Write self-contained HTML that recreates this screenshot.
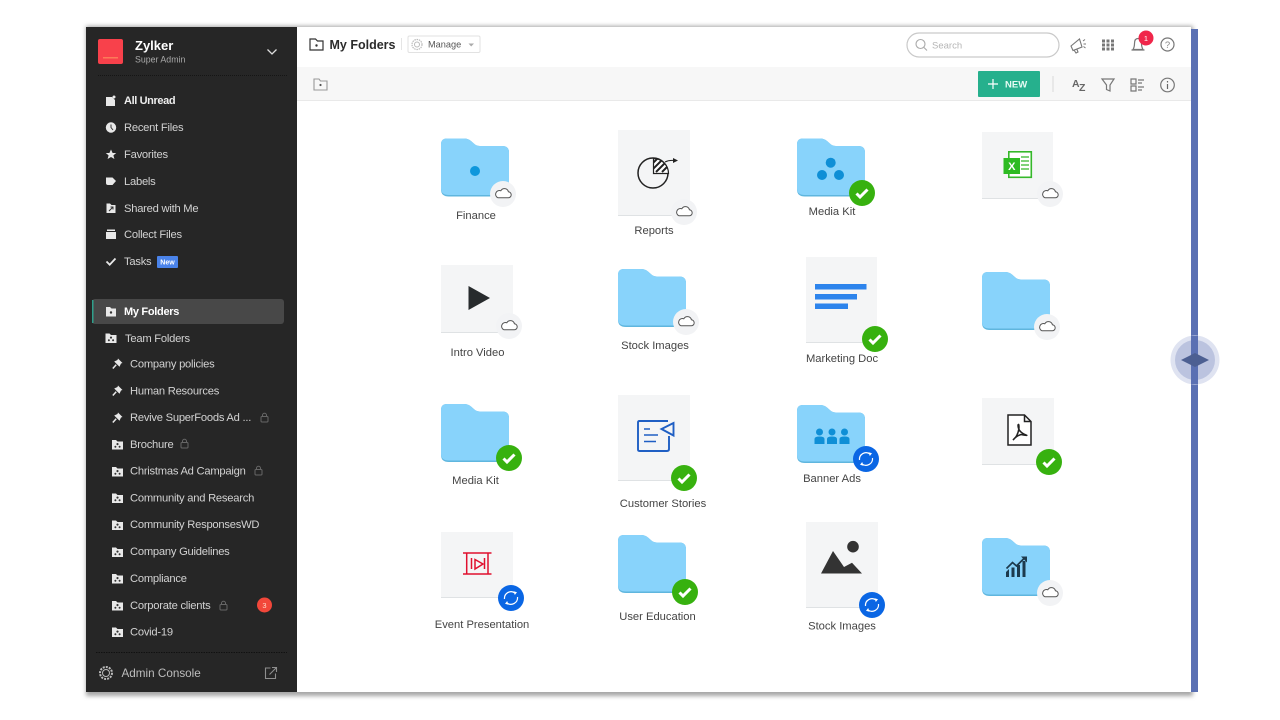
<!DOCTYPE html>
<html><head><meta charset="utf-8"><title>My Folders</title>
<style>
html,body{margin:0;padding:0;background:#fff;width:1280px;height:720px;overflow:hidden}
svg{position:absolute;left:0;top:0;display:block}
text{font-family:"Liberation Sans",sans-serif}
.s{fill:#d2d2d2;font-size:11.2px;letter-spacing:-.24px}
.l{fill:#444;font-size:11.2px;letter-spacing:0;text-anchor:middle}
.ic{fill:#e8e8e8}
.g{fill:none;stroke:#777;stroke-width:1.2}
</style></head><body>
<svg width="1280" height="720" viewBox="0 0 1280 720" xmlns="http://www.w3.org/2000/svg">
<defs>
<filter id="sh" x="-5%" y="-5%" width="110%" height="110%"><feGaussianBlur stdDeviation="2"/></filter>
<clipPath id="wedge"><path d="M653.500 158.500V173.500H668.500A15 15 0 0 0 653.500 158.500Z"/></clipPath>
<g id="folder"><path d="M6 0H23Q27 0 30 2.500L34 6Q36 7.500 39 7.500H61Q68 7.500 68 14V51Q68 58 61 58H8Q0 58 0 51V6Q0 0 6 0Z" fill="#5fb6de"/><path d="M6 0H23Q27 0 30 2.500L34 6Q36 7.500 39 7.500H61Q68 7.500 68 14V50Q68 56.500 61 56.500H8Q0 56.500 0 50V6Q0 0 6 0Z" fill="#88d3fb"/></g>
<g id="cloud"><circle r="13" fill="#f2f3f5"/><path d="M-5 3.800H5A3 3 0 0 0 5.400-2.200A4.100 4.100 0 0 0-2.200-3.200A3.500 3.500 0 0 0-5 3.800Z" fill="#fff" stroke="#555" stroke-width="1"/></g>
<g id="check"><circle r="13" fill="#37b10f"/><path d="M-5.500 .5L-2 4L5.500-3.500" fill="none" stroke="#fff" stroke-width="3"/></g>
<g id="sync"><circle r="13" fill="#0a66e4"/><path d="M-6.500 1A6.600 6.600 0 0 1 4-5M6.500-1A6.600 6.600 0 0 1-4 5" fill="none" stroke="#fff" stroke-width="1.200"/><path d="M2.600-6.800L6-5.800L3.800-3ZM-2.600 6.800L-6 5.800L-3.800 3Z" fill="#fff"/></g>
<g id="tf"><path d="M0 1.500H4L5.500 3H11V11H0Z" fill="#e8e8e8"/><path d="M5.500 4.500a1.100 1.100 0 1 1-.01 0ZM3.400 7.200a1 1 0 1 1-.01 0ZM7.600 7.200a1 1 0 1 1-.01 0Z" fill="#333"/></g>
<g id="pin"><path d="M6 .5L10.500 5L9 5.500L7.500 8.800L2.200 3.500L5.500 2Z" fill="#e8e8e8"/><path d="M4.200 6.800L.8 10.500" stroke="#e8e8e8" stroke-width="1.500"/></g>
<g id="lock"><rect x="0" y="3.500" width="7" height="5.500" rx="1" fill="none" stroke="#666" stroke-width="1"/><path d="M1.500 3.500V2.300A2 2 0 0 1 5.500 2.300V3.500" fill="none" stroke="#666"/></g>
</defs>

<!-- frame + shadow -->
<rect x="86" y="26" width="1107" height="670" fill="#a6a6a6" filter="url(#sh)"/>
<rect x="297" y="27" width="894" height="665" fill="#fff"/>
<rect x="86" y="27" width="211" height="665" fill="#262626"/>
<rect x="1191" y="29" width="7" height="663" fill="#5a70b3"/>

<!-- sidebar header -->
<rect x="98" y="39" width="25" height="25" rx="2" fill="#f8414b"/>
<rect x="103" y="57" width="15" height="1.500" fill="#ffa060" opacity=".6"/>
<text x="135" y="50" fill="#fff" font-size="13" font-weight="700">Zylker</text>
<text x="135" y="62.500" fill="#a9a9a9" font-size="8.800">Super Admin</text>
<path d="M267.500 49.500L272 54L276.500 49.500" fill="none" stroke="#ddd" stroke-width="1.300"/>
<path d="M98 75.500H287" stroke="#151515" stroke-width="1" stroke-dasharray="1 1"/>

<!-- nav icons -->
<path d="M106 97H112L115 100V106H106Z" class="ic"/><circle cx="114" cy="97" r="1.500" fill="#e8e8e8"/>
<circle cx="111" cy="127.500" r="5.200" class="ic"/><path d="M111 124.500V127.500L113 130" stroke="#333" fill="none"/>
<path d="M111 149.500L112.600 153H116.200L113.400 155.400L114.400 159L111 157L107.600 159L108.600 155.400L105.800 153H109.400Z" class="ic"/>
<path d="M106 177.500H112.500L116 181L112.500 185H108Q106 185 106 183Z" class="ic"/>
<path d="M106.500 203.500H110L111.500 205H115.500V213H106.500Z" class="ic"/><path d="M109 211L113 207M110.500 207H113V209.500" stroke="#333" fill="none"/>
<path d="M107 229.500H115V231H107ZM106 232H116V239H106Z" class="ic"/>
<path d="M106.500 261.500L109.700 264.700L115.500 258.500" fill="none" stroke="#e8e8e8" stroke-width="1.800"/>

<text x="124" y="104" fill="#eee" font-size="11" font-weight="700" letter-spacing="-.38">All Unread</text>
<text x="124" y="131" class="s">Recent Files</text>
<text x="124" y="158" class="s">Favorites</text>
<text x="124" y="185" class="s">Labels</text>
<text x="124" y="212" class="s">Shared with Me</text>
<text x="124" y="238" class="s">Collect Files</text>
<text x="124" y="265" class="s">Tasks</text>
<rect x="157" y="256" width="21" height="12" rx="1" fill="#4a83ea"/>
<text x="167.500" y="264.500" fill="#fff" font-size="7" font-weight="700" text-anchor="middle">New</text>

<!-- active -->
<rect x="92" y="299" width="192" height="25" rx="3" fill="#484848"/>
<rect x="92" y="300" width="1.500" height="23" fill="#2f9f8b"/>
<path d="M106 307H110L111.500 308.500H116V316.500H106Z" class="ic"/><circle cx="111" cy="312.500" r="1.200" fill="#333"/>
<text x="124" y="315" fill="#fff" font-size="11" font-weight="700" letter-spacing="-.3">My Folders</text>
<use href="#tf" x="105.500" y="332"/>
<text x="125" y="342" class="s">Team Folders</text>

<use href="#pin" x="112" y="358"/><text x="130" y="367.500" class="s">Company policies</text>
<use href="#pin" x="112" y="385"/><text x="130" y="394.500" class="s">Human Resources</text>
<use href="#pin" x="112" y="412"/><text x="130" y="421" class="s">Revive SuperFoods Ad ...</text><use href="#lock" x="261" y="413"/>
<use href="#tf" x="112" y="438.500"/><text x="130" y="448" class="s">Brochure</text><use href="#lock" x="181" y="439"/>
<use href="#tf" x="112" y="465.500"/><text x="130" y="474.500" class="s">Christmas Ad Campaign</text><use href="#lock" x="255" y="466"/>
<use href="#tf" x="112" y="492"/><text x="130" y="501.500" class="s">Community and Research</text>
<use href="#tf" x="112" y="519"/><text x="130" y="528" class="s">Community ResponsesWD</text>
<use href="#tf" x="112" y="546"/><text x="130" y="555" class="s">Company Guidelines</text>
<use href="#tf" x="112" y="572.500"/><text x="130" y="582" class="s">Compliance</text>
<use href="#tf" x="112" y="599.500"/><text x="130" y="609" class="s">Corporate clients</text><use href="#lock" x="220" y="601"/>
<circle cx="264.500" cy="605" r="7.500" fill="#f2473a"/><text x="264.500" y="608" fill="#ffd9c8" font-size="7.500" text-anchor="middle">3</text>
<use href="#tf" x="112" y="626"/><text x="130" y="635.500" class="s">Covid-19</text>

<path d="M96 652.500H287" stroke="#111" stroke-dasharray="1.500 1"/>
<circle cx="106" cy="673" r="3.500" fill="none" stroke="#bbb"/><circle cx="106" cy="673" r="6" fill="none" stroke="#bbb" stroke-width="2" stroke-dasharray="2 1.100"/>
<text x="121.500" y="677" fill="#bdbdbd" font-size="11.700">Admin Console</text>
<path d="M270.500 668H265.500V678.500H275.500V673.500M269.500 674.500L276 668M272 667.500H276.500V672" fill="none" stroke="#8e8e8e" stroke-width="1.100"/>

<!-- header -->
<path d="M310 39H315.500L317.500 41H323V50H310Z" fill="none" stroke="#333" stroke-width="1.200"/><circle cx="316.500" cy="45.500" r="1.200" fill="#333"/>
<text x="329.500" y="49" fill="#2b2b2b" font-size="12.500" font-weight="700">My Folders</text>
<path d="M401.500 38V50" stroke="#e5e5e5"/>
<rect x="408" y="36" width="72" height="16.500" rx="1.500" fill="#fff" stroke="#e2e2e2"/>
<circle cx="417" cy="44.500" r="5" fill="none" stroke="#bbb" stroke-dasharray="1.500 .8" stroke-width="1.200"/><circle cx="417" cy="44.500" r="2.500" fill="none" stroke="#bbb"/>
<text x="428" y="47.500" fill="#555" font-size="9.200">Manage</text>
<path d="M468.500 43.500H474L471.200 46.500Z" fill="#aaa"/>

<rect x="907" y="33" width="152" height="24" rx="12" fill="#fff" stroke="#c9c9c9" stroke-width="1.200"/>
<circle cx="920.500" cy="44" r="4.500" fill="none" stroke="#aaa" stroke-width="1.100"/><path d="M924 47.500L927 50.500" stroke="#aaa" stroke-width="1.100"/>
<text x="932" y="48.500" fill="#b5b5b5" font-size="9.500">Search</text>

<path d="M1071 46L1079.500 39L1082 47L1073 50.500ZM1074 50L1076 53L1078 52L1076.800 49" fill="none" stroke="#777" stroke-width="1.100"/><path d="M1083 41L1085 39.500M1083.500 44H1086M1083.500 46.500L1085.500 48" stroke="#777" stroke-width="1"/>
<g fill="#777"><rect x="1102" y="39.500" width="3" height="3"/><rect x="1106.500" y="39.500" width="3" height="3"/><rect x="1111" y="39.500" width="3" height="3"/><rect x="1102" y="43.500" width="3" height="3"/><rect x="1106.500" y="43.500" width="3" height="3"/><rect x="1111" y="43.500" width="3" height="3"/><rect x="1102" y="47.500" width="3" height="3"/><rect x="1106.500" y="47.500" width="3" height="3"/><rect x="1111" y="47.500" width="3" height="3"/></g>
<path d="M1133 49.500Q1134.500 47 1134.500 43.500Q1134.500 38.500 1138 38.500Q1141.500 38.500 1141.500 43.500Q1141.500 47 1143 49.500ZM1131.500 50H1144.500" fill="none" stroke="#777" stroke-width="1.200"/>
<circle cx="1146" cy="38" r="7.500" fill="#f0264a"/><text x="1146" y="41" fill="#fff" font-size="7.500" text-anchor="middle">1</text>
<circle cx="1167.500" cy="44.500" r="6.500" class="g"/><text x="1167.500" y="48" fill="#888" font-size="9.500" text-anchor="middle">?</text>

<!-- toolbar -->
<rect x="297" y="67" width="894" height="33" fill="#f7f7f7"/>
<rect x="297" y="100" width="894" height="1" fill="#e9e9e9"/>
<path d="M314 79H319L320.500 81H327V90H314Z" fill="none" stroke="#999" stroke-width="1.100"/><circle cx="320.500" cy="85" r="1.100" fill="#555"/>
<rect x="978" y="71" width="62" height="26" rx="1" fill="#26b08d"/>
<path d="M993 79V89M988 84H998" stroke="#fff" stroke-width="1.200"/>
<text x="1005" y="87.500" fill="#e7fbf4" font-size="9.500" font-weight="700">NEW</text>
<path d="M1053 76V92" stroke="#dadada"/>
<text x="1072" y="87" fill="#666" font-size="10.500" font-weight="700">A</text><text x="1079" y="91" fill="#666" font-size="10.500" font-weight="700">Z</text>
<path d="M1102 79H1114L1110 85V91L1106.500 89.500V85Z" class="g"/>
<path d="M1131 79H1136V84H1131ZM1131 86H1136V91H1131ZM1138 80H1144M1138 83H1142M1138 87H1144M1138 90H1142" class="g"/>
<circle cx="1167.500" cy="85" r="6.800" class="g"/><path d="M1167.500 84V89M1167.500 81V82.500" stroke="#666" stroke-width="1.200"/>

<!-- row 1 -->
<use href="#folder" x="441" y="138.500"/><circle cx="475" cy="171" r="5" fill="#0f97dc"/>
<rect x="618" y="130" width="72" height="86" fill="#dfe2e4"/><rect x="618" y="130" width="72" height="85" fill="#f4f5f6"/>
<circle cx="653" cy="173" r="15" fill="none" stroke="#222" stroke-width="1.500"/>
<path d="M653.500 158.500V173.500H668.500A15 15 0 0 0 653.500 158.500Z" fill="#fff" stroke="#222" stroke-width="1.200"/>
<path clip-path="url(#wedge)" d="M652 164L660 156M652 170L666 156M656 172L670 158M662 172L672 162" stroke="#222" stroke-width="2"/>
<path d="M665 162Q669 160 674 160.500" fill="none" stroke="#222"/><path d="M673 158L678 160.500L673 163Z" fill="#222"/>
<use href="#folder" x="797" y="138.500"/><g fill="#0f8fd6"><circle cx="830.700" cy="162.700" r="5"/><circle cx="822" cy="175" r="5"/><circle cx="839" cy="175" r="5"/></g>
<rect x="982" y="132" width="71" height="67" fill="#dfe2e4"/><rect x="982" y="132" width="71" height="66" fill="#f4f5f6"/>
<rect x="1008.800" y="151.800" width="22.500" height="25.500" fill="#fff" stroke="#35b82a" stroke-width="1.600"/><path d="M1021 157H1029M1021 161H1029M1021 165H1029M1021 169H1029" stroke="#35b82a" stroke-width="1.200"/><rect x="1003.500" y="158" width="16.500" height="16" fill="#2dbb22"/><text x="1011.800" y="170" fill="#fff" font-size="11" font-weight="700" text-anchor="middle">X</text>

<!-- row 2 -->
<rect x="441" y="265" width="72" height="68" fill="#dfe2e4"/><rect x="441" y="265" width="72" height="67" fill="#f4f5f6"/>
<path d="M468.500 286L490 298L468.500 310Z" fill="#272b2d"/>
<use href="#folder" x="618" y="269"/>
<rect x="806" y="257" width="71" height="86" fill="#dfe2e4"/><rect x="806" y="257" width="71" height="85" fill="#f4f5f6"/>
<g fill="#2d84ec"><rect x="815" y="284" width="51.500" height="5.500"/><rect x="815" y="294" width="42" height="5.500"/><rect x="815" y="303.500" width="33" height="5.500"/></g>
<use href="#folder" x="982" y="272"/>

<!-- row 3 -->
<use href="#folder" x="441" y="404"/>
<rect x="618" y="395" width="72" height="86" fill="#dfe2e4"/><rect x="618" y="395" width="72" height="85" fill="#f4f5f6"/>
<path d="M668 421H639.500Q638 421 638 422.500V449.500Q638 451 639.500 451H667Q669 451 669 449V436" fill="none" stroke="#1f5fc4" stroke-width="1.900"/><path d="M673.500 423L661.500 429L673.500 435.500Z" fill="none" stroke="#1f5fc4" stroke-width="1.900"/><path d="M644 429H650M644 435H658M644 441.500H656" stroke="#1f5fc4" stroke-width="1.600"/>
<use href="#folder" x="797" y="405"/><g fill="#0f8fd6"><circle cx="819.500" cy="432" r="3.500"/><circle cx="832" cy="432" r="3.500"/><circle cx="844.500" cy="432" r="3.500"/><path d="M814.500 444V439Q814.500 436.500 819.500 436.500Q824.500 436.500 824.500 439V444ZM827 444V439Q827 436.500 832 436.500Q837 436.500 837 439V444ZM839.500 444V439Q839.500 436.500 844.500 436.500Q849.500 436.500 849.500 439V444Z"/></g>
<rect x="982" y="398" width="72" height="67" fill="#dfe2e4"/><rect x="982" y="398" width="72" height="66" fill="#f4f5f6"/>
<path d="M1008 415H1024.500L1031 421.500V445H1008ZM1024.500 415V421.500H1031" fill="#fff" stroke="#222" stroke-width="1.500"/><path d="M1013 440Q1018 436 1019 428Q1019 423 1018 425Q1018 432 1026 435Q1029 436 1021 434.500Q1016 436 1013 440Z" fill="none" stroke="#222" stroke-width="1.500"/>

<!-- row 4 -->
<rect x="441" y="532" width="72" height="66" fill="#dfe2e4"/><rect x="441" y="532" width="72" height="65" fill="#f4f5f6"/>
<path d="M463 553H491.500M463 574H491.500M466.700 553V574M488 553V574M471.500 558V569M484.500 558V569" fill="none" stroke="#e0102f" stroke-width="1.500"/><path d="M475 559.500L483 564L475 569Z" fill="none" stroke="#e0102f" stroke-width="1.500"/>
<use href="#folder" x="618" y="535"/>
<rect x="806" y="522" width="72" height="86" fill="#dfe2e4"/><rect x="806" y="522" width="72" height="85" fill="#f4f5f6"/>
<circle cx="853" cy="546.700" r="5.800" fill="#333"/><path d="M821 573.500L833 551L844 567L852 562.800L862 573.500Z" fill="#333"/>
<use href="#folder" x="982" y="538"/>
<path d="M1006 572V577H1009V569ZM1011.500 567.500V577H1014.500V567.500ZM1017 565V577H1020V565ZM1022.500 561V577H1025.500V561Z" fill="#1d3a4d"/><path d="M1006.500 568.500L1012.500 562.500L1016.500 566L1024.500 558" fill="none" stroke="#1d3a4d" stroke-width="1.700"/><path d="M1021 556.500H1027V562.500Z" fill="#1d3a4d"/>

<!-- badges -->
<use href="#cloud" x="503" y="194"/><use href="#cloud" x="684" y="212"/><use href="#check" x="862" y="193"/><use href="#cloud" x="1050" y="194"/>
<use href="#cloud" x="509" y="326"/><use href="#cloud" x="686" y="322"/><use href="#check" x="875" y="339"/><use href="#cloud" x="1047" y="327"/>
<use href="#check" x="509" y="458"/><use href="#check" x="684" y="478"/><use href="#sync" x="866" y="459"/><use href="#check" x="1049" y="462"/>
<use href="#sync" x="511" y="598"/><use href="#check" x="685" y="592"/><use href="#sync" x="872" y="605"/><use href="#cloud" x="1050" y="593"/>

<!-- labels -->
<text x="476" y="219" class="l">Finance</text><text x="654" y="234" class="l">Reports</text><text x="832" y="215" class="l">Media Kit</text>
<text x="477.500" y="356" class="l">Intro Video</text><text x="655" y="349" class="l">Stock Images</text><text x="842" y="362" class="l">Marketing Doc</text>
<text x="475.500" y="484" class="l">Media Kit</text><text x="663" y="507" class="l">Customer Stories</text><text x="832" y="482" class="l">Banner Ads</text>
<text x="482" y="628" class="l">Event Presentation</text><text x="657.500" y="620" class="l">User Education</text><text x="842" y="629.500" class="l">Stock Images</text>

<!-- handle -->
<circle cx="1195" cy="360" r="24.500" fill="#dfe3f1"/><circle cx="1195" cy="360" r="20" fill="#bbc3df"/>
<rect x="1191" y="336" width="7" height="48" fill="#5a70b3"/>
<path d="M1181 360L1195 353L1209 360L1195 367Z" fill="#4c5f92"/>
</svg>
</body></html>
